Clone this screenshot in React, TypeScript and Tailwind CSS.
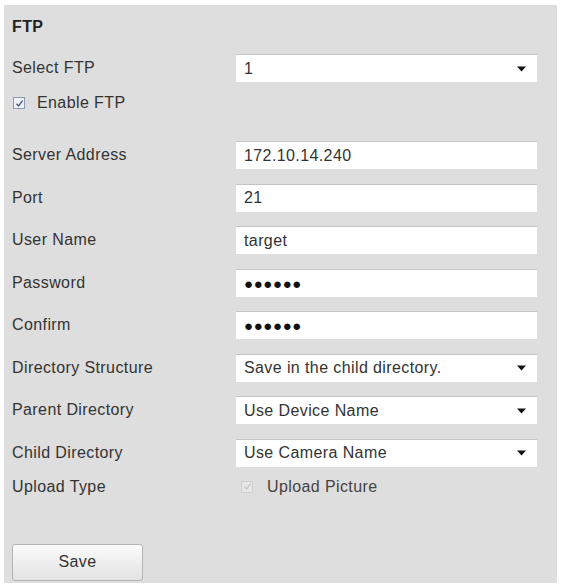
import React from "react";

const font = { fontFamily: '"Liberation Sans", Arial, sans-serif' };

function Caret() {
  return (
    <svg width="9" height="6" viewBox="0 0 9 6" className="shrink-0">
      <path d="M0 0.5 L9 0.5 L4.5 5.5 Z" fill="#111" />
    </svg>
  );
}

function Field({ value, select, dots }: { value: string; select?: boolean; dots?: boolean }) {
  return (
    <div className="flex h-[28px] w-[301px] items-center border-t border-[#c4c4c4] bg-white pl-[8px] pr-[11px]">
      {dots ? (
        <span className="flex-1 text-[15px] leading-none tracking-[0.6px] text-[#111]">●●●●●●</span>
      ) : (
        <span className="flex-1 text-[16px] tracking-[0.4px] text-[#333]">{value}</span>
      )}
      {select && <Caret />}
    </div>
  );
}

function Row({ label, children }: { label: string; children: React.ReactNode }) {
  return (
    <div className="flex h-[28px] items-center">
      <div className="w-[224px] text-[16px] tracking-[0.4px] text-[#333]">{label}</div>
      {children}
    </div>
  );
}

function Check({ disabled }: { disabled?: boolean }) {
  return (
    <span
      className={
        "flex h-[12px] w-[12px] items-center justify-center border " +
        (disabled ? "border-[#cfcfcf] bg-[#e6e6e6]" : "border-[#8a9bb5] bg-[#eef2f8]")
      }
    >
      <svg width="9" height="9" viewBox="0 0 9 9">
        <path
          d="M1.5 4.8 L3.6 7 L7.6 1.6"
          fill="none"
          stroke={disabled ? "#c8c8c8" : "#4a5a78"}
          strokeWidth="1.4"
        />
      </svg>
    </span>
  );
}

export default function App() {
  return (
    <div className="min-h-[587px] w-[562px] bg-white pt-[5px]" style={font}>
      <div className="ml-[4px] h-[578px] w-[553px] bg-[#dedede] pl-[8px] pt-[12px]">
        <div className="h-[20px] text-[16px] font-bold leading-[20px] tracking-[0.4px] text-[#222]">FTP</div>

        <div className="mt-[17px]">
          <Row label="Select FTP">
            <Field value="1" select />
          </Row>
        </div>

        <div className="mt-[14px] flex h-[14px] items-center gap-[12px] pl-[1px]">
          <Check />
          <span className="text-[16px] tracking-[0.4px] text-[#333]">Enable FTP</span>
        </div>

        <div className="mt-[31px] flex flex-col gap-[14.5px]">
          <Row label="Server Address">
            <Field value="172.10.14.240" />
          </Row>
          <Row label="Port">
            <Field value="21" />
          </Row>
          <Row label="User Name">
            <Field value="target" />
          </Row>
          <Row label="Password">
            <Field value="" dots />
          </Row>
          <Row label="Confirm">
            <Field value="" dots />
          </Row>
          <Row label="Directory Structure">
            <Field value="Save in the child directory." select />
          </Row>
          <Row label="Parent Directory">
            <Field value="Use Device Name" select />
          </Row>
          <Row label="Child Directory">
            <Field value="Use Camera Name" select />
          </Row>
        </div>

        <div className="mt-[10px] flex h-[20px] items-center">
          <div className="w-[224px] text-[16px] tracking-[0.4px] text-[#333]">Upload Type</div>
          <div className="flex items-center gap-[14px] pl-[5px]">
            <Check disabled />
            <span className="text-[16px] tracking-[0.4px] text-[#444]">Upload Picture</span>
          </div>
        </div>

        <button className="mt-[47px] flex h-[37px] w-[131px] items-center justify-center rounded-[3px] border border-[#b4b4b4] bg-gradient-to-b from-[#fbfbfb] to-[#e2e2e2] text-[16px] tracking-[0.4px] text-[#333]">
          Save
        </button>
      </div>
    </div>
  );
}
